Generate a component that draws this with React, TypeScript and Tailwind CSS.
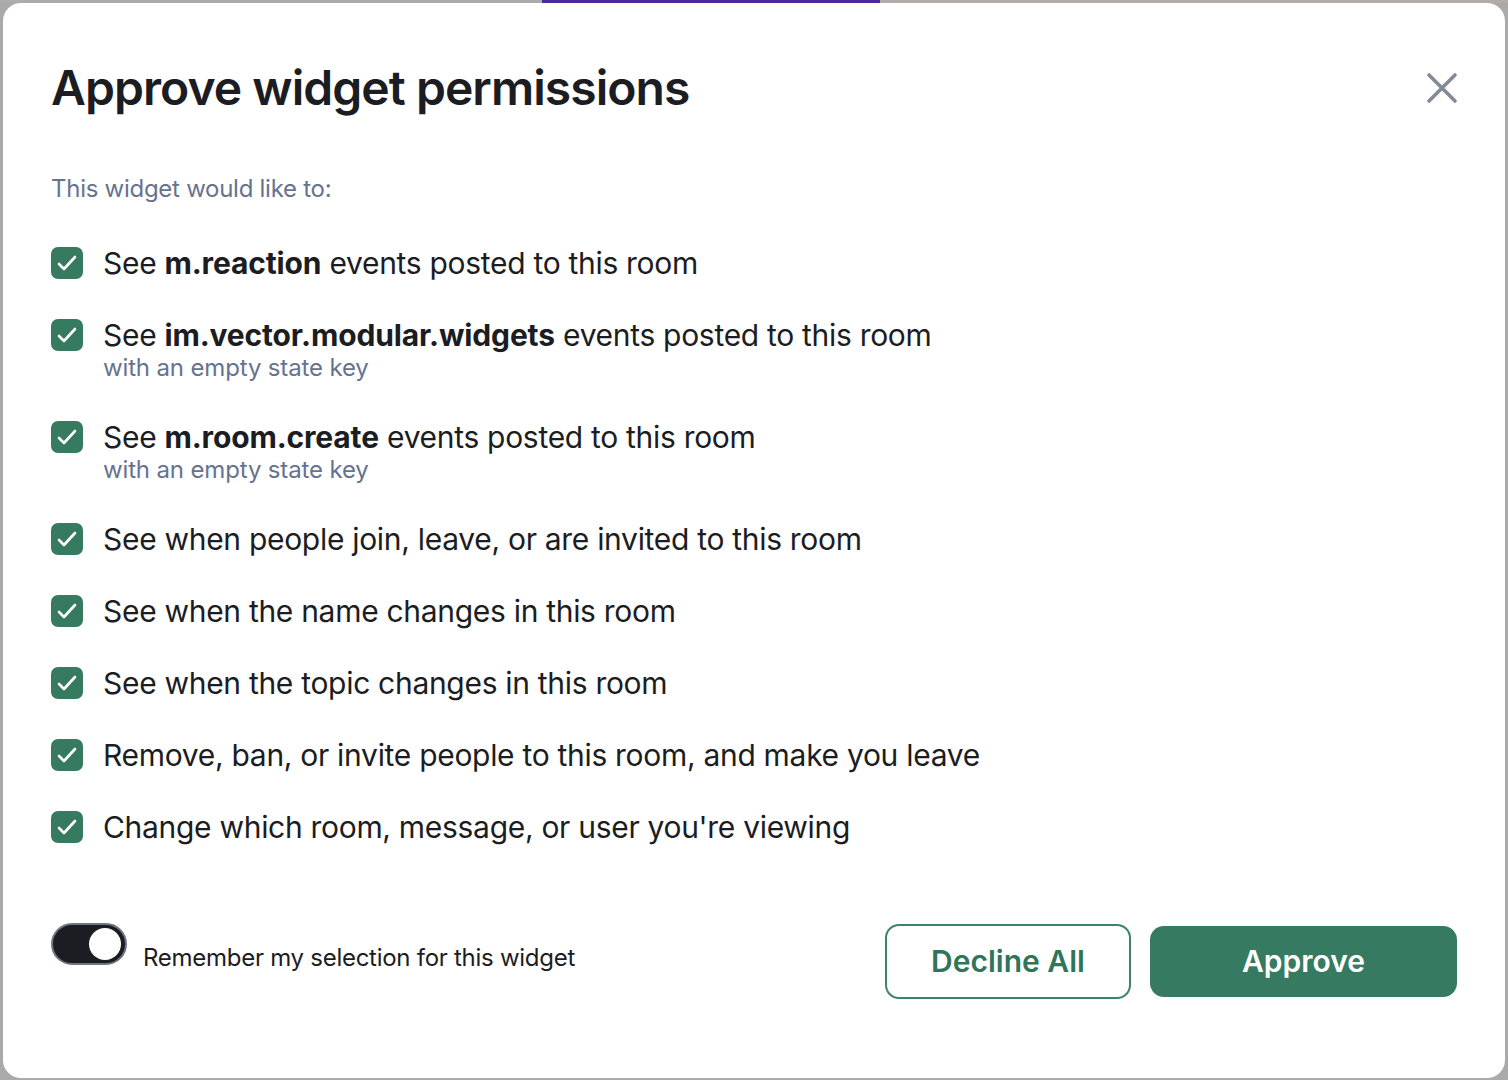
import React from "react";

type Perm = { pre: string; bold?: string; post?: string; sub?: string };

const perms: Perm[] = [
   { pre: "See ", bold: "m.reaction", post: " events posted to this room" },
   {
      pre: "See ",
      bold: "im.vector.modular.widgets",
      post: " events posted to this room",
      sub: "with an empty state key",
   },
   {
      pre: "See ",
      bold: "m.room.create",
      post: " events posted to this room",
      sub: "with an empty state key",
   },
   { pre: "See when people join, leave, or are invited to this room" },
   { pre: "See when the name changes in this room" },
   { pre: "See when the topic changes in this room" },
   { pre: "Remove, ban, or invite people to this room, and make you leave" },
   { pre: "Change which room, message, or user you're viewing" },
];

function Check() {
   return (
      <div className="w-[32px] h-[32px] mt-[2px] shrink-0 rounded-[7px] bg-[#367a60] flex items-center justify-center">
         <svg width="32" height="32" viewBox="0 0 32 32" fill="none">
            <path
               d="M8 17l5 5 11-12"
               stroke="white"
               strokeWidth="2.6"
               strokeLinecap="round"
               strokeLinejoin="round"
            />
         </svg>
      </div>
   );
}

export default function App() {
   return (
      <div className="w-full h-[1080px] bg-[#a9aaa9] flex flex-col overflow-hidden font-['Inter',sans-serif]">
         <div className="flex h-[3px] shrink-0">
            <div className="w-[542px] bg-[#abacab]" />
            <div className="w-[338px] bg-[#4a2a9e]" />
            <div className="flex-1 bg-[#b2aca9]" />
         </div>
         <div className="mx-[3px] h-[1075px] rounded-[18px] bg-white px-[48px] pt-[56px] flex flex-col">
            <div className="flex items-center justify-between h-[58px]">
               <h1 className="text-[48px] leading-[58px] font-semibold text-[#1b1d22] tracking-[-0.95px]">
                  Approve widget permissions
               </h1>
               <svg width="32" height="32" viewBox="0 0 32 32" fill="none" className="-mr-[1px]">
                  <path
                     d="M3 3l26 26M29 3L3 29"
                     stroke="#818a95"
                     strokeWidth="3.6"
                     strokeLinecap="round"
                  />
               </svg>
            </div>

            <p className="mt-[57px] text-[24px] leading-[30px] text-[#66738f] tracking-[-0.27px]">
               This widget would like to:
            </p>

            <div className="mt-[41px] flex flex-col gap-[36px]">
               {perms.map((p, i) => (
                  <div key={i} className="flex gap-[20px]">
                     <Check />
                     <div className="flex flex-col">
                        <span className="text-[30px] leading-[36px] text-[#1b1d22] tracking-[-0.3px]">
                           {p.pre}
                           {p.bold && (
                              <b className="font-bold tracking-[-0.15px]">{p.bold}</b>
                           )}
                           {p.post}
                        </span>
                        {p.sub && (
                           <span className="text-[24px] leading-[30px] text-[#66738f] tracking-[-0.15px]">
                              {p.sub}
                           </span>
                        )}
                     </div>
                  </div>
               ))}
            </div>

            <div className="mt-[78px] flex justify-between items-start">
               <div className="flex items-start gap-[16px]">
                  <div className="w-[76px] h-[42px] rounded-full bg-[#1b1d22] border-[2px] border-[#6e7682] flex items-center justify-end pr-[4px]">
                     <div className="w-[32px] h-[32px] rounded-full bg-white" />
                  </div>
                  <span className="mt-[20px] text-[24px] leading-[30px] text-[#1b1d22] tracking-[-0.27px]">
                     Remember my selection for this widget
                  </span>
               </div>
               <div className="flex items-center gap-[19px] h-[75px] mt-[1px]">
                  <button className="w-[246px] h-[75px] rounded-[14px] border-[2px] border-[#3a8468] text-[#2f755a] text-[30px] font-semibold">
                     Decline All
                  </button>
                  <button className="w-[307px] h-[71px] rounded-[14px] bg-[#367a62] text-white text-[30px] font-semibold">
                     Approve
                  </button>
               </div>
            </div>
         </div>
      </div>
   );
}
